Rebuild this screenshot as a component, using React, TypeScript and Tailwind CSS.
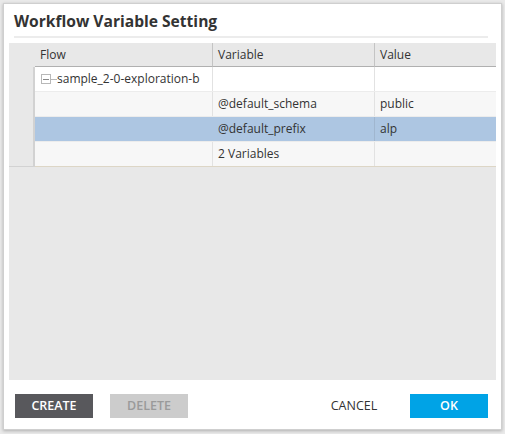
import React from "react";

const font = { fontFamily: '"Open Sans", "Liberation Sans", sans-serif' };

type Row = { flow?: string; variable: string; value: string; selected?: boolean; tree?: boolean; bg: string };

const rows: Row[] = [
  { flow: "sample_2-0-exploration-b", variable: "", value: "", tree: true, bg: "bg-white" },
  { variable: "@default_schema", value: "public", bg: "bg-[#f7f7f7]" },
  { variable: "@default_prefix", value: "alp", selected: true, bg: "bg-[#adc6e2]" },
  { variable: "2 Variables", value: "", bg: "bg-[#f7f7f7]" },
];

function TreeToggle() {
  return (
    <span className="flex items-center">
      <span className="w-[10px] h-[10px] border border-[#b8b8b8] bg-white flex items-center justify-center">
        <span className="w-[6px] h-px bg-[#888]" />
      </span>
      <span className="w-[6px] h-px bg-[#b8b8b8]" />
    </span>
  );
}

export default function App() {
  return (
    <div className="w-[505px] h-[434px] bg-[#e9e9e9] pt-[3px] pl-[3px] pr-[3px] pb-[4px]" style={font}>
      <div className="w-full h-full bg-white border border-[#cfcfcf] shadow-[0_1px_3px_rgba(0,0,0,0.25)] flex flex-col">
        <div className="px-[9px] pt-[6px]">
          <div className="text-[15.6px] font-bold text-[#333] leading-[22px] pb-[4px] border-b-2 border-[#ececec] ml-[1px] mr-[4px]">
            Workflow Variable Setting
          </div>
        </div>
        <div className="mx-[5px] mt-[5px] flex-1 bg-[#e8e8e8] text-[12px] text-[#333]">
          <div className="grid grid-cols-[26px_178px_162px_1fr]">
            <div className="h-[24px]" />
            <div className="h-[24px] flex items-center pl-[5px] border-b border-[#b0b0b0] border-r border-r-[#c4c4c4]">Flow</div>
            <div className="h-[24px] flex items-center pl-[5px] border-b border-[#b0b0b0] border-r border-r-[#c4c4c4]">Variable</div>
            <div className="h-[24px] flex items-center pl-[5px] border-b border-[#b0b0b0]">Value</div>
          </div>
          <div className="flex">
            <div className="w-[26px] border-r-2 border-[#d2d2d2] border-b border-b-[#d2d2d2]" />
            <div className="flex-1">
              {rows.map((r, i) => (
                <div
                  key={i}
                  className={`grid grid-cols-[178px_162px_1fr] h-[25px] ${r.bg} ${i === rows.length - 1 ? "border-b border-[#ddd6c6]" : "border-b border-[#ececec]"}`}
                >
                  <div className={`flex items-center pl-[6px] ${r.selected ? "" : "border-r border-[#e2e2e2]"}`}>
                    {r.tree && <TreeToggle />}
                    {r.flow}
                  </div>
                  <div className={`flex items-center pl-[5px] border-r ${r.selected ? "border-[#a0b6cf]" : "border-[#e2e2e2]"}`}>{r.variable}</div>
                  <div className="flex items-center pl-[5px]">{r.value}</div>
                </div>
              ))}
            </div>
          </div>
        </div>
        <div className="h-[49px] flex items-center pl-[11px] pr-[13px] pt-[3px] text-[12.5px]">
          <button className="w-[78px] h-[24px] bg-[#58585c] text-white font-semibold">CREATE</button>
          <button className="w-[78px] h-[24px] ml-[17px] bg-[#cccccc] text-[#9a9a9a] font-semibold">DELETE</button>
          <div className="flex-1" />
          <button className="w-[78px] h-[24px] text-[#333]">CANCEL</button>
          <button className="w-[78px] h-[24px] ml-[17px] bg-[#00a3e6] text-white font-semibold">OK</button>
        </div>
      </div>
    </div>
  );
}
